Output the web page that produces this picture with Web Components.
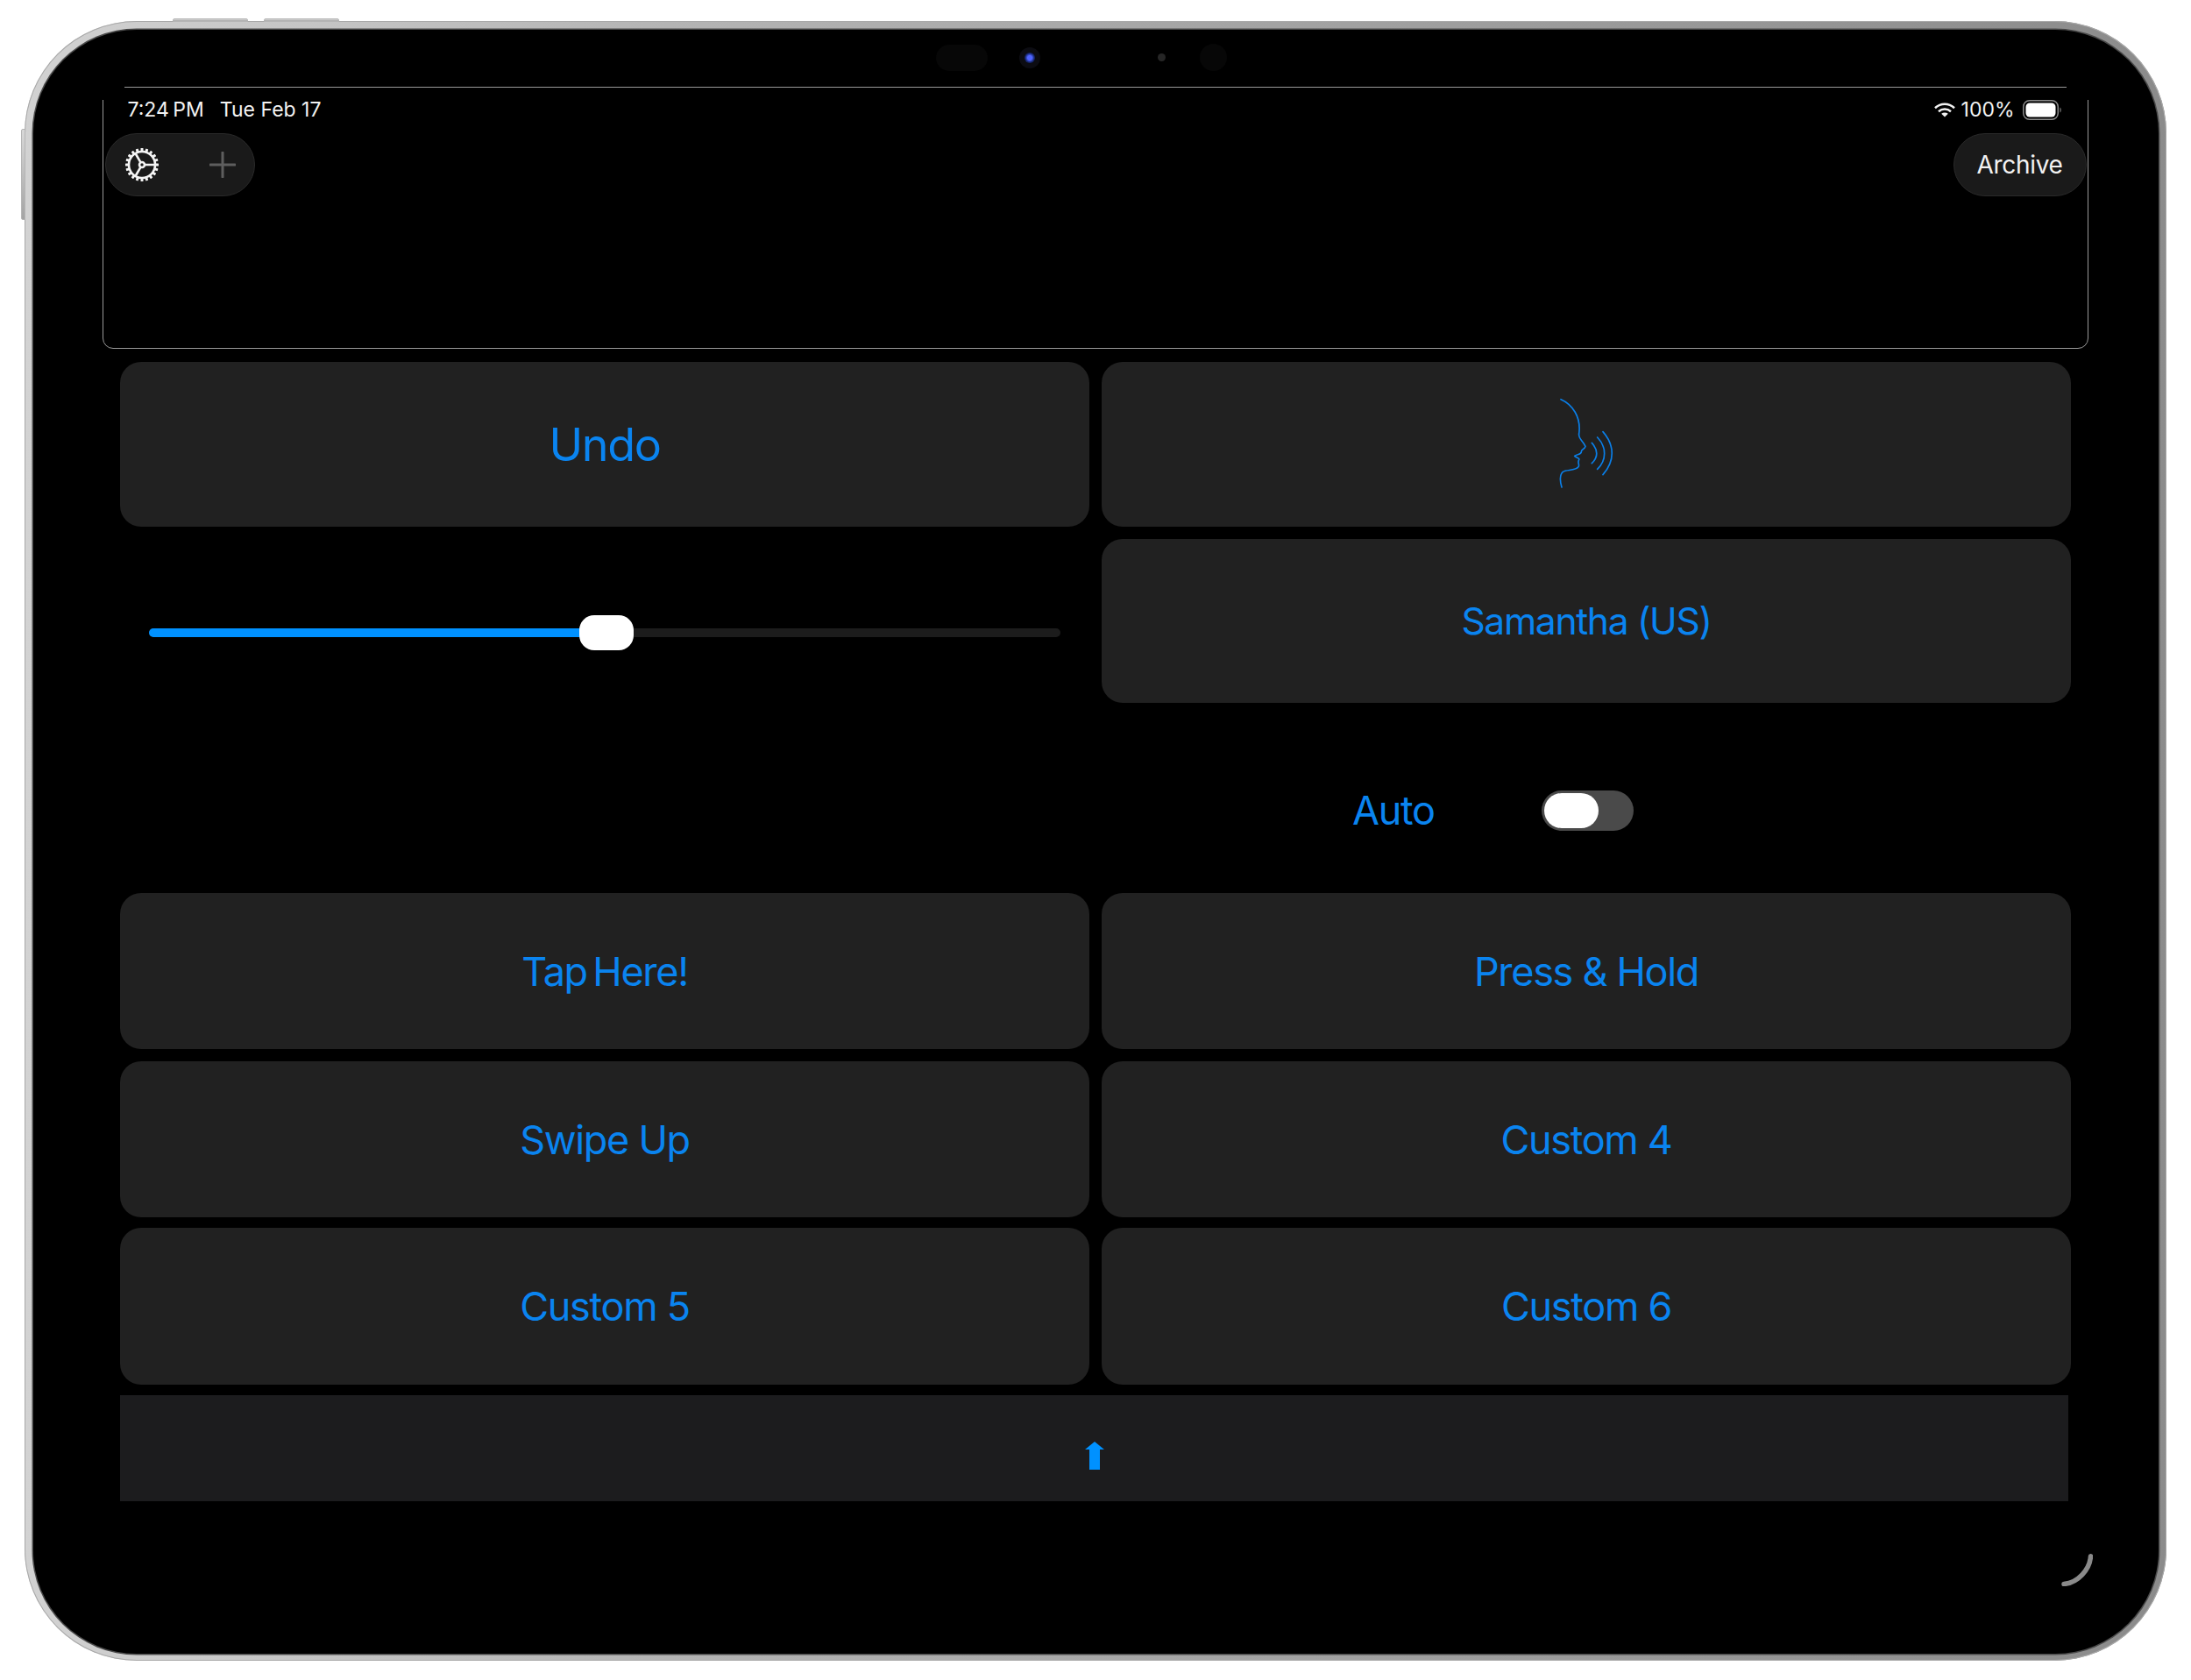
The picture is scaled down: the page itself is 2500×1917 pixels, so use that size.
<!DOCTYPE html>
<html lang="en">
<head>
<meta charset="utf-8">
<title>Speech pad</title>
<style>
  html, body { margin: 0; background: #fff; }
  body { width: 2500px; height: 1917px; overflow: hidden; font-family: Inter, "Liberation Sans", sans-serif; }
  .last { margin-top: -2px; }
</style>
</head>
<body>
<wc-ipad>
  <wc-note-box>
    <wc-status-bar></wc-status-bar>
    <wc-toolbar></wc-toolbar>
  </wc-note-box>
  <wc-pad-grid>
    <wc-action-button size="52">Undo</wc-action-button>
    <wc-action-button><wc-speak-icon></wc-speak-icon></wc-action-button>
    <wc-slider value="0.502"></wc-slider>
    <wc-action-button size="42.5">Samantha (US)</wc-action-button>
    <span></span>
    <wc-auto-row></wc-auto-row>
    <wc-action-button style="word-spacing: -5px">Tap Here!</wc-action-button>
    <wc-action-button>Press &amp; Hold</wc-action-button>
    <wc-action-button>Swipe Up</wc-action-button>
    <wc-action-button>Custom 4</wc-action-button>
    <wc-action-button class="last">Custom 5</wc-action-button>
    <wc-action-button class="last">Custom 6</wc-action-button>
  </wc-pad-grid>
  <wc-key-bar></wc-key-bar>
</wc-ipad>

<script>
class IPad extends HTMLElement {
  constructor() {
    super()
    this.attachShadow({ mode: 'open' })
    this.shadowRoot.innerHTML = /* html */ `
      <style>
        :host {
          display: block;
          position: relative;
          box-sizing: border-box;
          width: 2444px;
          height: 1871px;
          margin: 24px 0 0 28px;
          padding: 10px 9px 8px 10px;
          border-radius: 128px;
          background: linear-gradient(90deg, #d2d2d2 0%, #b4b4b4 30%, #9c9c9c 70%, #8b8b8b 100%);
          box-shadow: inset 0 0 0 1px #a9a9a9;
        }
        .screen {
          position: relative;
          box-sizing: border-box;
          height: 100%;
          padding: 65px 80px 0 79px;
          border-radius: 118px;
          background: #000;
          box-shadow: 0 0 0 1.500px #4a4a4a;
        }
        .side {
          position: absolute;
          background: linear-gradient(#d8d8d8, #a4a4a4);
          border: 1px solid #b5b5b5;
          box-sizing: border-box;
        }
        .vol1 { left: 169px; top: -3px; width: 86px; height: 4px; border-radius: 2px 2px 0 0; }
        .vol2 { left: 273px; top: -3px; width: 86px; height: 4px; border-radius: 2px 2px 0 0; }
        .power { left: -4px; top: 123px; width: 5px; height: 104px; border-radius: 2px 0 0 2px; }
        .sensor { position: absolute; background: #070707; }
        .mic { left: 1030px; top: 17px; width: 59px; height: 30px; border-radius: 15px; }
        .halo { left: 1125px; top: 20px; width: 24px; height: 24px; border-radius: 50%; background: #0c0c12; }
        .lens { left: 1131px; top: 26px; width: 12px; height: 12px; border-radius: 50%; background: radial-gradient(circle, #4f63ff 0 30%, #16276e 60%, #0b1440 100%); }
        .dot { left: 1283px; top: 27px; width: 9px; height: 9px; border-radius: 50%; background: #262626; }
        .flood { left: 1331px; top: 16px; width: 31px; height: 31px; border-radius: 50%; }
        .corner { position: absolute; left: 2314px; top: 1739px; width: 36px; height: 37px; }
      </style>
      <div class="side vol1"></div>
      <div class="side vol2"></div>
      <div class="side power"></div>
      <div class="screen">
        <div class="sensor mic"></div>
        <div class="sensor halo"></div>
        <div class="sensor lens"></div>
        <div class="sensor dot"></div>
        <div class="sensor flood"></div>
        <slot></slot>
        <svg class="corner" viewBox="0 0 36 37" fill="none" stroke="#8a8a8a" stroke-width="5.500" stroke-linecap="round">
          <path d="M33.500 2.800C32.500 18 19 33 3 34.500"/>
        </svg>
      </div>
    `
  }
}

class NoteBox extends HTMLElement {
  constructor() {
    super()
    this.attachShadow({ mode: 'open' })
    this.shadowRoot.innerHTML = /* html */ `
      <style>
        :host {
          display: block;
          position: relative;
          box-sizing: border-box;
          height: 299px;
          padding: 5px 1.500px 0 1.500px;
          border: 1.500px solid #9a9a9a;
          border-radius: 12px;
        }
        .mask { position: absolute; top: -3px; width: 27px; height: 17px; background: #000; }
        .l { left: -3px; }
        .r { right: -3px; }
      </style>
      <div class="mask l"></div>
      <div class="mask r"></div>
      <slot></slot>
    `
  }
}

class StatusBar extends HTMLElement {
  constructor() {
    super()
    this.attachShadow({ mode: 'open' })
    this.shadowRoot.innerHTML = /* html */ `
      <style>
        :host {
          display: flex;
          position: relative;
          align-items: center;
          height: 30px;
          margin-top: 5px;
          margin-bottom: 12px;
          padding: 0 28px 0 26px;
          color: #f2f2f2;
          font-size: 23px;
          font-weight: 400;
          white-space: pre;
        }
        .time { margin-right: 18px; word-spacing: -2px; }
        .right { margin-left: auto; display: flex; align-items: center; }
        .wifi { width: 24px; height: 17px; margin-right: 7px; }
        .bat { width: 45px; height: 23px; margin-left: 9px; }
      </style>
      <span class="time">7:24 PM</span>
      <span>Tue Feb 17</span>
      <span class="right">
        <svg class="wifi" viewBox="0 0 24 17" fill="none" stroke="#f2f2f2" stroke-width="2.600">
          <path d="M1 6.200C7.500 .3 16.500 .3 23 6.200"/>
          <path d="M5 10.200C9.200 6.600 14.800 6.600 19 10.200"/>
          <path d="M12 16.600l-3.800-3.800c2.200-1.600 5.400-1.600 7.600 0z" fill="#f2f2f2" stroke="none"/>
        </svg>
        <span>100%</span>
        <svg class="bat" viewBox="0 0 45 23">
          <rect x=".75" y=".75" width="39.500" height="21.500" rx="7" fill="none" stroke="#8a8a8a" stroke-width="1.500"/>
          <rect x="3.500" y="3.500" width="34" height="16" rx="4.500" fill="#fff"/>
          <path d="M42.500 8.500c1.600.6 1.600 5.400 0 6z" fill="#8a8a8a"/>
        </svg>
      </span>
    `
  }
}

class Toolbar extends HTMLElement {
  constructor() {
    super()
    this.attachShadow({ mode: 'open' })
    const teeth = Array.from({ length: 20 }, (_, i) => `<rect x="18.500" y="1" width="3" height="4" rx=".6" transform="rotate(${i * 18} 20 20)"/>`).join('')
    this.shadowRoot.innerHTML = /* html */ `
      <style>
        :host { display: flex; justify-content: space-between; }
        .pill {
          display: flex;
          align-items: center;
          box-sizing: border-box;
          height: 72px;
          border-radius: 36px;
          background: #1a1a1a;
          border: 1.500px solid #2a2a2a;
        }
        .left { width: 171px; padding-left: 21px; }
        .gear { width: 40px; height: 40px; }
        .plus { width: 30px; height: 30px; margin-left: 57px; }
        .archive { width: 152px; justify-content: center; color: #f2f2f2; font-size: 28px; letter-spacing: -.3px; }
      </style>
      <div class="pill left">
        <svg class="gear" viewBox="0 0 40 40">
          <g fill="#f4f4f4">${teeth}</g>
          <g fill="none" stroke="#f4f4f4" stroke-width="2.600">
            <circle cx="20" cy="20" r="15"/>
            <circle cx="20" cy="20" r="3"/>
            <path d="M23 20H35M18.500 17.400L12.500 7M18.500 22.600L12.500 33"/>
          </g>
        </svg>
        <svg class="plus" viewBox="0 0 30 30" stroke="#5e5e5e" stroke-width="3" stroke-linecap="round">
          <path d="M15 1V29M1 15H29"/>
        </svg>
      </div>
      <div class="pill archive">Archive</div>
    `
  }
}

class PadGrid extends HTMLElement {
  constructor() {
    super()
    this.attachShadow({ mode: 'open' })
    this.shadowRoot.innerHTML = /* html */ `
      <style>
        :host {
          display: grid;
          grid-template-columns: 1106px 1106px;
          grid-template-rows: 188px 187px 189px 178px 178px 177px;
          gap: 14px 14px;
          margin: 15px 20px 0 20px;
        }
      </style>
      <slot></slot>
    `
  }
}

class ActionButton extends HTMLElement {
  constructor() {
    super()
    this.attachShadow({ mode: 'open' })
    this.shadowRoot.innerHTML = /* html */ `
      <style>
        :host {
          display: flex;
          align-items: center;
          justify-content: center;
          border-radius: 24px;
          background: #212121;
          color: #0a84f0;
          font-size: 45px;
          font-weight: 400;
          letter-spacing: -1.300px;
        }
      </style>
      <slot></slot>
    `
    if (this.hasAttribute('size')) this.style.fontSize = this.getAttribute('size') + 'px'
  }
}

class SpeakIcon extends HTMLElement {
  constructor() {
    super()
    this.attachShadow({ mode: 'open' })
    this.shadowRoot.innerHTML = /* html */ `
      <style>
        :host { display: block; width: 200px; height: 160px; }
        svg { display: block; width: 100%; height: 100%; }
      </style>
      <svg viewBox="30 21 600 480" fill="none" stroke="#0a7fe8" stroke-width="5" stroke-linecap="round" stroke-linejoin="round">
        <path d="M243 107C282 124 313 167 305 225C302 241 320 251 327 268C325 279 312 276 313 287C312 297 300 293 290 301C297 308 310 308 304 316C300 325 308 332 303 338C295 352 262 347 250 355C238 365 240 390 246 408"/>
        <path d="M349 256C370 280 370 305 349 326"/>
        <path d="M368 237C400 270 400 315 368 346"/>
        <path d="M387 218C428 265 428 318 387 365"/>
      </svg>
    `
  }
}

class Slider extends HTMLElement {
  constructor() {
    super()
    this.attachShadow({ mode: 'open' })
    const value = parseFloat(this.getAttribute('value')) * 100
    this.shadowRoot.innerHTML = /* html */ `
      <style>
        :host { display: block; padding: 102px 33px 0 33px; }
        .track { position: relative; height: 10px; border-radius: 5px; background: #1c1c1c; }
        .fill { height: 100%; width: ${value}%; border-radius: 5px; background: #0091ff; }
        .thumb {
          position: absolute;
          top: -15px;
          left: ${value}%;
          width: 62px;
          height: 40px;
          margin-left: -31px;
          border-radius: 17px;
          background: #fff;
        }
      </style>
      <div class="track"><div class="fill"></div><div class="thumb"></div></div>
    `
  }
}

class AutoRow extends HTMLElement {
  constructor() {
    super()
    this.attachShadow({ mode: 'open' })
    this.shadowRoot.innerHTML = /* html */ `
      <style>
        :host {
          display: flex;
          align-items: center;
          box-sizing: border-box;
          padding: 28px 0 0 286px;
          color: #0a84f0;
          font-size: 45px;
          letter-spacing: -1.300px;
        }
        .label { width: 216px; }
      </style>
      <span class="label">Auto</span>
      <wc-toggle></wc-toggle>
    `
  }
}

class Toggle extends HTMLElement {
  constructor() {
    super()
    this.attachShadow({ mode: 'open' })
    this.shadowRoot.innerHTML = /* html */ `
      <style>
        :host {
          display: block;
          box-sizing: border-box;
          width: 105px;
          height: 46px;
          padding: 3px;
          border-radius: 23px;
          background: #4a4a4a;
        }
        .knob { width: 62px; height: 40px; border-radius: 20px; background: #fff; }
      </style>
      <div class="knob"></div>
    `
  }
}

class KeyBar extends HTMLElement {
  constructor() {
    super()
    this.attachShadow({ mode: 'open' })
    this.shadowRoot.innerHTML = /* html */ `
      <style>
        :host {
          display: flex;
          justify-content: center;
          box-sizing: border-box;
          height: 121px;
          margin: 12px 23px 0 20px;
          padding-top: 53px;
          background: #1c1c1e;
        }
        svg { width: 22px; height: 32px; }
      </style>
      <svg viewBox="0 0 22 32" fill="#0091ff"><path d="M11 0L22 9H17V32H5V9H0Z"/></svg>
    `
  }
}

customElements.define('wc-ipad', IPad)
customElements.define('wc-note-box', NoteBox)
customElements.define('wc-status-bar', StatusBar)
customElements.define('wc-toolbar', Toolbar)
customElements.define('wc-pad-grid', PadGrid)
customElements.define('wc-action-button', ActionButton)
customElements.define('wc-speak-icon', SpeakIcon)
customElements.define('wc-slider', Slider)
customElements.define('wc-auto-row', AutoRow)
customElements.define('wc-toggle', Toggle)
customElements.define('wc-key-bar', KeyBar)
</script>
</body>
</html>
